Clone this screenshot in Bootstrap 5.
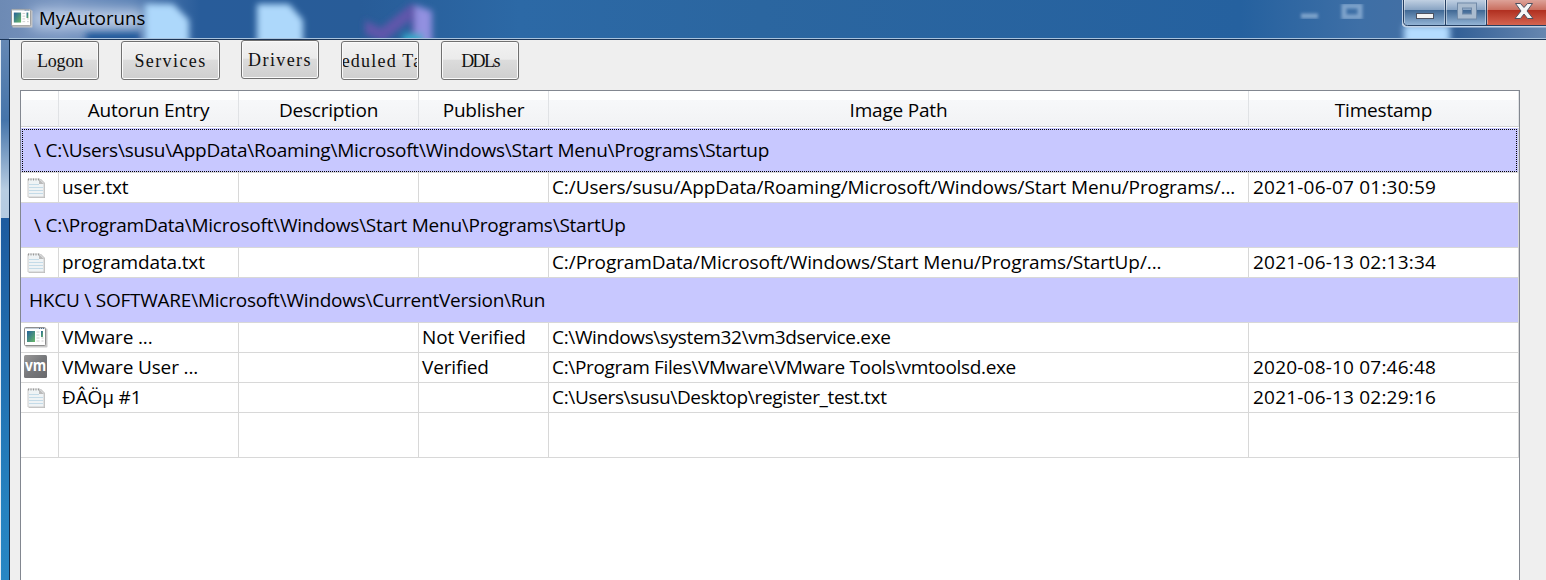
<!DOCTYPE html>
<html lang="en">
<head>
<meta charset="utf-8">
<title>MyAutoruns</title>
<link href="https://cdn.jsdelivr.net/npm/bootstrap@5.3.0/dist/css/bootstrap.min.css" rel="stylesheet">
<style>
body{height:580px;overflow:hidden;font:19px/1 "Open Sans","Noto Sans",sans-serif;color:#000;background:#efefef}
.win{height:580px}
.title-bar{height:40px;overflow:hidden;border-bottom:1px solid #1b3557;
background:linear-gradient(90deg,#6d8ab4 0,#7794c0 60px,#5c82b5 130px,#285c9a 200px,#285c98 360px,#2c69a6 520px,#2b66a0 760px,#25619f 1240px,#3e6fa6 1360px,#426fa4 1410px,#2f5d95 1450px,#6787b0 1546px)}
.title-bar::after{content:"";position:absolute;left:9px;right:0;top:38px;height:1px;background:#a9c3dd}
.backdrop{position:absolute;left:0;top:0}
.caption-text{left:39px;top:8px;font-size:18.6px;line-height:20px}
.app-icon{left:10px;top:8px}
.sys{right:0;top:0}
.edge{width:10px;border-left:1px solid #dfe9f3;border-right:1px solid #16304f;background:linear-gradient(#6588b4 0,#4574aa 80px,#b8cde2 150px,#b4cbe2 178px,#1d5b9f 178px,#2582c0 470px,#2786c4)}
.tools{height:50px;padding-left:11px;gap:22px}
.tool{height:39px;width:78px;padding:0;margin-top:1px;border:1px solid #707070;border-radius:3px;box-shadow:inset 0 0 0 1px #fafafa;background:linear-gradient(#f2f2f2,#ebebeb 47%,#dcdcdc 48%,#cfcfcf);font:18px/39px "Liberation Serif",serif;color:#111;overflow:hidden;white-space:nowrap;display:flex;justify-content:center}
.tool:hover{color:#000;border-color:#707070}
.tool.up{margin-top:0;letter-spacing:1.4px}
.tool.wide{width:99px;margin-right:-1px;letter-spacing:1.4px}
.tool.tight{letter-spacing:-1.6px}
.tool.short{letter-spacing:-.2px}
.tool .clip{margin:0 1px;overflow:hidden;display:flex;justify-content:center;width:74px;letter-spacing:1.2px}
.grid-box{width:1500px;height:490px;margin-left:10px;border:1px solid #828790;border-bottom:0;background:#fff}
.line{display:grid;grid-template-columns:38px 180px 180px 130px 700px 270px;height:30px}
.line>div{border-right:1px solid #d8d8d8;border-bottom:1px solid #d8d8d8;padding-left:3px;line-height:28px;white-space:nowrap;overflow:hidden;letter-spacing:-.15px}
.line>div:last-child{letter-spacing:.2px;padding-left:4px}
.line>.fwd{letter-spacing:-.1px}
.line>.back{letter-spacing:-.34px}
.line.heads{height:37px;border-bottom:1px solid #fff;background:linear-gradient(#fff 9px,#f7f8fa 9px,#f1f2f4)}
.line.heads>div{text-align:center;line-height:38px;padding:0;letter-spacing:-.2px;border-right-color:#e0e2e5;border-bottom-color:#d5d5d5}
.group{height:45px;padding-left:13px;background:#c8c8ff;border-bottom:1px solid #d8d8d8;border-right:1px solid #d8d8d8;line-height:44px;white-space:pre;letter-spacing:-.23px}
.group.key{padding-left:8px}
.focus-row{position:relative}
.focus-row::after{content:"";position:absolute;inset:1px 1px 0;border:1px dotted #000}
.line svg{display:block}
</style>
<script src="https://cdn.jsdelivr.net/npm/bootstrap@5.3.0/dist/js/bootstrap.bundle.min.js"></script>
</head>
<body>
<svg width="0" height="0" class="position-absolute">
<defs>
<linearGradient id="pane" x2="1" y2="1"><stop stop-color="#25629b"/><stop offset="1" stop-color="#69b968"/></linearGradient>
<linearGradient id="vmg" x2="1" y2="1"><stop stop-color="#999"/><stop offset=".5" stop-color="#77787b"/><stop offset="1" stop-color="#69696c"/></linearGradient>
<symbol id="note" viewBox="0 0 24 24"><path d="M5 3h12l4 4v15H5z" fill="#bbb"/><path d="M4 3h12l4 4v14H4z" fill="#eff3f5" stroke="#cdcdcd"/><path d="M4 3.500h12" stroke="#999" stroke-dasharray="1 1.500" stroke-width="2"/><path d="M15 3l5 5h-5z" fill="#bbb"/><path d="M5 8.500h10M5 11.500h14M5 14.500h14M5 17.500h14" stroke="#c4dbe8"/></symbol>
<symbol id="app" viewBox="0 0 24 22"><rect x="1.500" y="2.500" width="22" height="19" rx="1" fill="#c9c9c9"/><rect x=".5" y="1.500" width="21" height="18" rx="1" fill="#fff" stroke="#8e8e8e"/><path d="M1 2.500h20" stroke="#c5d0da"/><path d="M15 2.500h5" stroke="#53718f" stroke-dasharray="1 1"/><rect x="3" y="5" width="8" height="11" fill="url(#pane)"/><path d="M12.500 6h3M12.500 9h3M12.500 12h3M12.500 15h3M17.500 12h2M17.500 15h2" stroke="#ccc"/><rect x="17" y="5" width="2" height="6" fill="url(#pane)"/></symbol>
<filter id="b8" x="-30%" y="-60%" width="160%" height="220%"><feGaussianBlur stdDeviation="7"/></filter><filter id="b4"><feGaussianBlur stdDeviation="3"/></filter><filter id="b2"><feGaussianBlur stdDeviation="1.500"/></filter>
<linearGradient id="glass" x2="0" y2="1"><stop stop-color="#c0d0e2"/><stop offset=".38" stop-color="#8aa5c4"/><stop offset=".42" stop-color="#416995"/><stop offset="1" stop-color="#93b4d6"/></linearGradient>
<linearGradient id="redg" x2="0" y2="1"><stop stop-color="#dda298"/><stop offset=".38" stop-color="#ca7061"/><stop offset=".42" stop-color="#b13021"/><stop offset="1" stop-color="#d46450"/></linearGradient>
</defs>
</svg>
<div class="win d-flex flex-column">
<header class="title-bar position-relative flex-shrink-0">
<svg class="backdrop" width="1546" height="39">
<rect x="32" y="10" width="112" height="18" fill="#c3d3ea" filter="url(#b8)"/>
<g filter="url(#b4)"><path d="M145 4h28l16 16v26h-44zM257 4h32l14 16v26h-46z" fill="#add8fb"/><path d="M365 20l16 8 30-24 20 8v34h-20V20l-28 22-18-8z" fill="#5f57aa"/><path d="M415 5l17 6v32h-17z" fill="#9290e0"/><path d="M403 34h20v10h-20z" fill="#35a9cb"/><path d="M86 33h54v10H86z" fill="#1e5799"/><path d="M1404 25h46v20h-46z" fill="#b4dcff"/></g>
<g filter="url(#b2)" fill="none" stroke="#7ea3cb"><path d="M1301 16h17" stroke-width="5"/><rect x="1344" y="6" width="16" height="11" stroke-width="5"/></g>
</svg>
<svg class="app-icon position-absolute" width="24" height="20"><use href="#app" width="24" height="20"/></svg>
<span class="caption-text position-absolute">MyAutoruns</span>
<svg class="sys position-absolute" width="144" height="28">
<path d="M1 0v22q0 4 4 4h139" fill="none" stroke="#c1d2e6" stroke-width="3"/>
<path d="M2 0h41v25H6q-4 0-4-4z" fill="url(#glass)"/><path d="M44 0h41v25H44z" fill="url(#glass)"/><path d="M85 0h59v25H85z" fill="url(#redg)"/>
<path d="M1.500 0v21q0 4.500 4 4.500H144M43.500 0v25M84.500 0v25" fill="none" stroke="#253f62"/><path d="M2.500 0v23M42.500 0v24M44.500 0v24M83.500 0v24M85.500 0v24" stroke="#ffffff70"/>
<rect x="14.500" y="13.500" width="17" height="5" fill="#f3f3f3" stroke="#4c5261"/>
<rect x="58" y="5.500" width="14" height="11" fill="none" stroke="#718aa8" stroke-width="6"/><rect x="58" y="5.500" width="14" height="11" fill="none" stroke="#aabccf" stroke-width="4"/>
<path d="M113.500 3.500h5l3.500 4 3.500-4h5l-5.500 7.500 6 7.500h-5.500l-3.500-4.500-3.500 4.500h-5.500l6-7.500z" fill="#f6f6f6" stroke="#4e5160" stroke-linejoin="round"/>
</svg>
</header>
<div class="d-flex flex-grow-1">
<div class="edge flex-shrink-0"></div>
<main class="flex-grow-1">
<div class="tools d-flex align-items-start">
<button class="btn tool short">Logon</button>
<button class="btn tool wide">Services</button>
<button class="btn tool up">Drivers</button>
<button class="btn tool"><span class="clip">Scheduled Tasks</span></button>
<button class="btn tool tight">DDLs</button>
</div>
<section class="grid-box">
<div class="line heads"><div></div><div>Autorun Entry</div><div>Description</div><div>Publisher</div><div>Image Path</div><div>Timestamp</div></div>
<div class="group focus-row">\ C:\Users\susu\AppData\Roaming\Microsoft\Windows\Start Menu\Programs\Startup</div>
<div class="line"><div><svg width="24" height="28"><use href="#note" y="3" width="24" height="24"/></svg></div><div>user.txt</div><div></div><div></div><div class="fwd">C:/Users/susu/AppData/Roaming/Microsoft/Windows/Start Menu/Programs/...</div><div>2021-06-07 01:30:59</div></div>
<div class="group">\ C:\ProgramData\Microsoft\Windows\Start Menu\Programs\StartUp</div>
<div class="line"><div><svg width="24" height="28"><use href="#note" y="3" width="24" height="24"/></svg></div><div>programdata.txt</div><div></div><div></div><div class="fwd">C:/ProgramData/Microsoft/Windows/Start Menu/Programs/StartUp/...</div><div>2021-06-13 02:13:34</div></div>
<div class="group key">HKCU \ SOFTWARE\Microsoft\Windows\CurrentVersion\Run</div>
<div class="line"><div><svg width="24" height="28"><use href="#app" y="3" width="24" height="22"/></svg></div><div>VMware ...</div><div></div><div>Not Verified</div><div class="back">C:\Windows\system32\vm3dservice.exe</div><div></div></div>
<div class="line"><div><svg width="24" height="28"><rect y="2" width="23" height="23" rx="1.500" fill="url(#vmg)"/><text x="1" y="18" font-family="Open Sans" font-weight="700" font-size="16" textLength="21" lengthAdjust="spacingAndGlyphs" fill="#fff">vm</text></svg></div><div>VMware User ...</div><div></div><div>Verified</div><div class="back">C:\Program Files\VMware\VMware Tools\vmtoolsd.exe</div><div>2020-08-10 07:46:48</div></div>
<div class="line"><div><svg width="24" height="28"><use href="#note" y="3" width="24" height="24"/></svg></div><div>ÐÂÖµ #1</div><div></div><div></div><div class="back">C:\Users\susu\Desktop\register_test.txt</div><div>2021-06-13 02:29:16</div></div>
<div class="line" style="height:45px"><div></div><div></div><div></div><div></div><div></div><div></div></div>
</section>
</main>
</div>
</div>
</body>
</html>
